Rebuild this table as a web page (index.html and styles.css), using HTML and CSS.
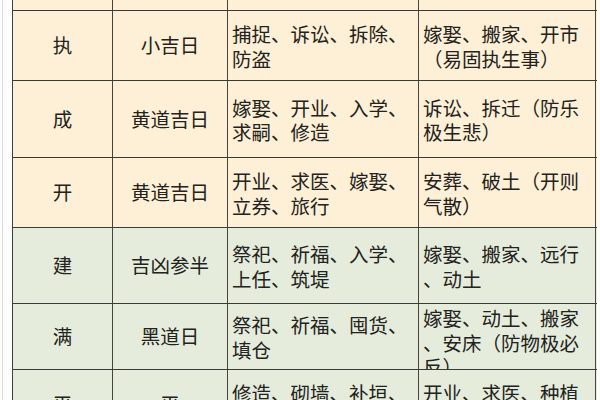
FILE: index.html
```html
<!DOCTYPE html>
<html lang="zh-CN">
<head>
<meta charset="utf-8">
<link rel="stylesheet" href="styles.css">
</head>
<body>
<div class="page">
  <div class="table">
    <div class="row cream top">
      <div class="cell"></div><div class="cell"></div><div class="cell"></div><div class="cell"></div>
    </div>
    <div class="row cream h70">
      <div class="cell center">执</div>
      <div class="cell center">小吉日</div>
      <div class="cell text">捕捉、诉讼、拆除、<br>防盗</div>
      <div class="cell text">嫁娶、搬家、开市<br>（易固执生事）</div>
    </div>
    <div class="row cream h77">
      <div class="cell center">成</div>
      <div class="cell center">黄道吉日</div>
      <div class="cell text">嫁娶、开业、入学、<br>求嗣、修造</div>
      <div class="cell text">诉讼、拆迁（防乐<br>极生悲）</div>
    </div>
    <div class="row cream h70">
      <div class="cell center">开</div>
      <div class="cell center">黄道吉日</div>
      <div class="cell text">开业、求医、嫁娶、<br>立券、旅行</div>
      <div class="cell text">安葬、破土（开则<br>气散）</div>
    </div>
    <div class="row green h76">
      <div class="cell center">建</div>
      <div class="cell center">吉凶参半</div>
      <div class="cell text">祭祀、祈福、入学、<br>上任、筑堤</div>
      <div class="cell text">嫁娶、搬家、远行<br>、动土</div>
    </div>
    <div class="row green h66">
      <div class="cell center">满</div>
      <div class="cell center">黑道日</div>
      <div class="cell text">祭祀、祈福、囤货、<br>填仓</div>
      <div class="cell text">嫁娶、动土、搬家<br>、安床（防物极必<br>反）</div>
    </div>
    <div class="row green h70">
      <div class="cell center">平</div>
      <div class="cell center">平</div>
      <div class="cell text">修造、砌墙、补垣、<br>塞穴</div>
      <div class="cell text">开业、求医、种植<br>、祈福</div>
    </div>
  </div>
</div>
</body>
</html>
```

FILE: styles.css
```css
html, body {
  margin: 0;
  padding: 0;
  background: #fdfdfb;
}

body {
  width: 600px;
  height: 400px;
  overflow: hidden;
  font-family: "Noto Sans CJK SC", "Noto Sans", sans-serif;
  font-size: 19.5px;
  color: #222220;
}

.page {
  margin-left: 2px;
  border-left: 1px solid #dadada;
  padding-left: 9px;
  height: 400px;
}

.table {
  width: 584px;
  border-left: 1px solid #3e3e3a;
}

.row {
  display: grid;
  grid-template-columns: 100px 115px 191px 177px;
  border-bottom: 1px solid #3a3a36;
  box-sizing: border-box;
}

.row.cream { background: #fdf0d6; }
.row.green { background: #e5ecdc; }

.row.top { height: 11px; }
.row.h66 { height: 66px; }
.row.h70 { height: 70px; }
.row.h76 { height: 76px; }
.row.h77 { height: 77px; }

.cell {
  border-right: 1px solid #45443f;
  overflow: hidden;
  white-space: nowrap;
  line-height: 24.5px;
  display: flex;
  flex-direction: column;
  justify-content: safe center;
}

.cell.center {
  align-items: center;
  text-align: center;
}

.cell.text {
  padding: 2px 0 0 4px;
}
```
